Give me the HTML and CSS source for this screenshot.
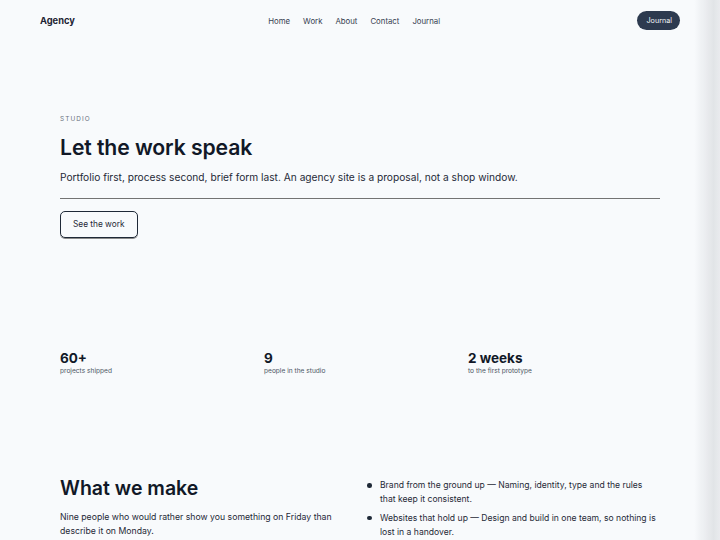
FILE: index.html
```html
<!DOCTYPE html>
<html lang="en">
<head>
<meta charset="utf-8">
<title>Agency</title>
<link rel="stylesheet" href="styles.css">
</head>
<body>
<header class="nav">
  <div class="brand">Agency</div>
  <nav class="links">
    <a href="#">Home</a>
    <a href="#">Work</a>
    <a href="#">About</a>
    <a href="#">Contact</a>
    <a href="#">Journal</a>
  </nav>
  <a class="pill" href="#">Journal</a>
</header>
<main class="main">
  <section class="hero">
    <div class="eyebrow">STUDIO</div>
    <h1 class="title">Let the work speak</h1>
    <p class="lead">Portfolio first, process second, brief form last. An agency site is a proposal, not a shop window.</p>
    <hr class="rule">
    <a class="btn" href="#">See the work</a>
  </section>
  <section class="stats">
    <div class="stat"><div class="num">60+</div><div class="lbl">projects shipped</div></div>
    <div class="stat"><div class="num">9</div><div class="lbl">people in the studio</div></div>
    <div class="stat"><div class="num">2 weeks</div><div class="lbl">to the first prototype</div></div>
  </section>
  <section class="make">
    <div class="make-left">
      <h2 class="h2">What we make</h2>
      <p class="body">Nine people who would rather show you something on Friday than describe it on Monday.</p>
    </div>
    <ul class="list">
      <li>Brand from the ground up — Naming, identity, type and the rules that keep it consistent.</li>
      <li>Websites that hold up — Design and build in one team, so nothing is lost in a handover.</li>
    </ul>
  </section>
</main>
<div class="edge"></div>
</body>
</html>
```
FILE: styles.css
```css
* { box-sizing: border-box; }
html, body { margin: 0; padding: 0; }
body {
  background: #f8fafc;
  color: #0f172a;
  font-family: Inter, "Noto Sans", sans-serif;
  overflow: hidden;
  height: 540px;
}
a { color: inherit; text-decoration: none; }
.nav {
  display: flex;
  justify-content: space-between;
  align-items: flex-start;
  padding: 11px 40px 0 40px;
  height: 41px;
}
.brand {
  font-size: 9.3px;
  font-weight: 700;
  line-height: 20px;
  color: #1e2433;
}
.links {
  display: flex;
  gap: 13px;
  font-size: 7.8px;
  line-height: 20px;
  color: #374151;
  margin-left: -4px;
}
.pill {
  background: #2d3a4f;
  color: #f1f5f9;
  font-size: 7.2px;
  line-height: 19px;
  height: 19px;
  padding: 0 8px 0 9px;
  border-radius: 10px;
}
.main { padding: 0 60px; }
.hero { padding-top: 73px; }
.eyebrow {
  font-size: 6.4px;
  letter-spacing: 1.1px;
  color: #6b7280;
  line-height: 10px;
}
.title {
  margin: 10px 0 0 0;
  font-size: 21.2px;
  font-weight: 600;
  line-height: 26px;
  letter-spacing: -0.1px;
  color: #111827;
}
.lead {
  margin: 10px 0 0 0;
  font-size: 10.2px;
  line-height: 14px;
  color: #1f2937;
}
.rule {
  margin: 14px 0 0 0;
  border: 0;
  border-top: 1px solid #737373;
  height: 0;
}
.btn {
  display: inline-block;
  margin-top: 12px;
  height: 27px;
  line-height: 25px;
  padding: 0 12px;
  border: 1px solid #1f2937;
  border-radius: 5px;
  font-size: 8.3px;
  color: #1f2937;
  box-shadow: 0 1px 0 #8a8a8a;
}
.stats {
  display: grid;
  grid-template-columns: repeat(3, 1fr);
  gap: 12px;
  margin-top: 112px;
}
.num {
  font-size: 13.5px;
  font-weight: 700;
  line-height: 17px;
  color: #111827;
}
.lbl {
  font-size: 6.6px;
  line-height: 9px;
  color: #4b5563;
}
.make {
  display: grid;
  grid-template-columns: 1fr 1fr;
  gap: 8px;
  margin-top: 99px;
}
.h2 {
  margin: 0;
  font-size: 19.5px;
  font-weight: 600;
  line-height: 26px;
  color: #111827;
}
.body {
  margin: 9px 0 0 0;
  font-size: 8.7px;
  line-height: 14px;
  color: #1f2937;
  max-width: 280px;
}
.list {
  list-style: none;
  margin: 0;
  padding: 3px 0 0 16px;
  font-size: 8.6px;
  line-height: 14px;
  color: #1f2937;
}
.list li { position: relative; margin-bottom: 4.5px; }
.list li::before {
  content: "";
  position: absolute;
  left: -13px;
  top: 5px;
  width: 4.5px;
  height: 4.5px;
  border-radius: 50%;
  background: #1f2937;
}
.edge {
  position: fixed;
  top: 0;
  right: 0;
  width: 26px;
  height: 100%;
  background: linear-gradient(to right, rgba(148,152,160,0), rgba(148,152,160,0.22) 75%, rgba(148,152,160,0.14));
  pointer-events: none;
}
```
